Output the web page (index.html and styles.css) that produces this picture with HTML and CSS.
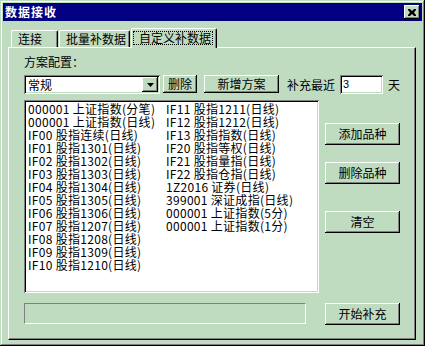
FILE: index.html
```html
<!DOCTYPE html>
<html>
<head>
	<meta charset="utf-8">
	<title>数据接收</title>
	<link rel="stylesheet" href="styles.css">
</head>
<body>
	<div class="window">
		<div class="titlebar">
			<span class="title">数据接收</span>
			<div class="close">
				<svg width="8" height="7" viewBox="0 0 8 7"><path d="M0 0h2l2 2 2-2h2v1l-2 2.5 2 2.5v1h-2l-2-2-2 2h-2v-1l2-2.5-2-2.5z" fill="#000"/></svg>
			</div>
		</div>
		<div class="tabs">
			<div class="tab tab-conn">连接</div>
			<div class="tab tab-batch">批量补数据</div>
			<div class="tab active"><span class="focus">自定义补数据</span></div>
		</div>
		<div class="panel">
			<div class="label">方案配置：</div>
			<div class="toolbar">
				<div class="combo">
					<span class="combo-text">常规</span>
					<span class="combo-btn">
						<svg width="7" height="4" viewBox="0 0 7 4"><path d="M0 0h7l-3.5 4z" fill="#000"/></svg>
					</span>
				</div>
				<div class="btn btn-del">删除</div>
				<div class="btn btn-new">新增方案</div>
				<span class="recent">补充最近</span>
				<div class="days">3</div>
				<span class="unit">天</span>
			</div>
			<div class="main">
				<div class="list">
					<div class="col col-first">
						<div class="item">000001 上证指数(分笔)</div>
						<div class="item">000001 上证指数(日线)</div>
						<div class="item">IF00 股指连续(日线)</div>
						<div class="item">IF01 股指1301(日线)</div>
						<div class="item">IF02 股指1302(日线)</div>
						<div class="item">IF03 股指1303(日线)</div>
						<div class="item">IF04 股指1304(日线)</div>
						<div class="item">IF05 股指1305(日线)</div>
						<div class="item">IF06 股指1306(日线)</div>
						<div class="item">IF07 股指1207(日线)</div>
						<div class="item">IF08 股指1208(日线)</div>
						<div class="item">IF09 股指1309(日线)</div>
						<div class="item">IF10 股指1210(日线)</div>
					</div>
					<div class="col">
						<div class="item">IF11 股指1211(日线)</div>
						<div class="item">IF12 股指1212(日线)</div>
						<div class="item">IF13 股指指数(日线)</div>
						<div class="item">IF20 股指等权(日线)</div>
						<div class="item">IF21 股指量指(日线)</div>
						<div class="item">IF22 股指仓指(日线)</div>
						<div class="item">1Z2016 证券(日线)</div>
						<div class="item">399001 深证成指(日线)</div>
						<div class="item">000001 上证指数(5分)</div>
						<div class="item">000001 上证指数(1分)</div>
					</div>
				</div>
				<div class="side">
					<div class="btn btn-side btn-add">添加品种</div>
					<div class="btn btn-side btn-remove">删除品种</div>
					<div class="btn btn-side btn-clear">清空</div>
				</div>
			</div>
			<div class="bottom">
				<div class="progress"></div>
				<div class="btn btn-side">开始补充</div>
			</div>
		</div>
	</div>
</body>
</html>
```

FILE: styles.css
```css
body {
	margin: 0;
	background: #c0dcc0;
	font-family: "Noto Sans CJK SC", "Liberation Sans", sans-serif;
	font-size: 12px;
	color: #000;
}
.window {
	width: 425px;
	height: 346px;
	box-sizing: border-box;
	padding: 3px;
	background: #c0dcc0;
	box-shadow: inset -1px -1px #000, inset 1px 1px #c0dcc0, inset -2px -2px #808080, inset 2px 2px #fff;
}
.titlebar {
	height: 18px;
	background: #000080;
	display: flex;
	align-items: center;
	justify-content: space-between;
	padding: 0 2px 0 2px;
}
.title {
	color: #fff;
	font-weight: bold;
	font-size: 12px;
	line-height: 18px;
	letter-spacing: 1px;
}
.close {
	width: 16px;
	height: 14px;
	background: #c0dcc0;
	display: flex;
	align-items: center;
	justify-content: center;
	box-shadow: inset -1px -1px #000, inset 1px 1px #fff, inset -2px -2px #808080;
}
.tabs {
	display: flex;
	align-items: flex-end;
	height: 20px;
	margin: 7px 0 -1px 8px;
	position: relative;
	z-index: 1;
}
.tab {
	height: 17px;
	margin-bottom: 1px;
	margin-right: 1px;
	box-sizing: border-box;
	border-top: 1px solid #fff;
	border-left: 1px solid #fff;
	border-right: 1px solid #000;
	box-shadow: inset -1px 0 #808080;
	border-radius: 2px 2px 0 0;
	padding-left: 6px;
	line-height: 15px;
	background: #c0dcc0;
}
.tab-conn {
	width: 47px;
}
.tab-batch {
	width: 71px;
}
.tab.active {
	width: 86px;
	height: 20px;
	margin-bottom: 0;
	padding-left: 1px;
	display: flex;
	align-items: flex-start;
}
.focus {
	margin-top: 2px;
	height: 14px;
	box-sizing: border-box;
	border: 1px dotted #000;
	padding: 0 1px 0 5px;
	line-height: 12px;
}
.panel {
	margin-left: 5px;
	width: 408px;
	height: 293px;
	box-sizing: border-box;
	border-top: 1px solid #fff;
	border-left: 1px solid #fff;
	border-right: 1px solid #000;
	border-bottom: 1px solid #000;
	box-shadow: inset -1px -1px #808080;
	padding: 7px 0 0 15px;
}
.label {
	line-height: 14px;
}
.toolbar {
	display: flex;
	align-items: flex-start;
	height: 19px;
	margin-top: 6px;
}
.combo {
	width: 136px;
	height: 19px;
	box-sizing: border-box;
	background: #fff;
	box-shadow: inset 1px 1px #808080, inset -1px -1px #fff, inset 2px 2px #000, inset -2px -2px #c0dcc0;
	display: flex;
	align-items: center;
	justify-content: space-between;
	padding: 2px;
}
.combo-text {
	padding-left: 2px;
	line-height: 15px;
}
.combo-btn {
	width: 16px;
	height: 15px;
	background: #c0dcc0;
	display: flex;
	align-items: center;
	justify-content: center;
	box-shadow: inset -1px -1px #000, inset 1px 1px #fff, inset -2px -2px #808080;
}
.btn {
	height: 18px;
	box-sizing: border-box;
	background: #c0dcc0;
	box-shadow: inset -1px -1px #000, inset 1px 1px #fff, inset -2px -2px #808080;
	display: flex;
	align-items: center;
	justify-content: center;
	line-height: 14px;
}
.btn-del {
	width: 34px;
	margin-left: 3px;
}
.btn-new {
	width: 75px;
	margin-left: 7px;
}
.recent {
	margin-left: 8px;
	line-height: 19px;
}
.days {
	width: 43px;
	height: 19px;
	margin-left: 5px;
	box-sizing: border-box;
	background: #fff;
	box-shadow: inset 1px 1px #808080, inset -1px -1px #fff, inset 2px 2px #000, inset -2px -2px #c0dcc0;
	padding: 2px 0 0 3px;
	line-height: 15px;
	font-family: "Liberation Sans", sans-serif;
	font-size: 11px;
}
.unit {
	margin-left: 5px;
	line-height: 19px;
}
.main {
	display: flex;
	margin-top: 6px;
	height: 193px;
}
.list {
	width: 295px;
	height: 193px;
	box-sizing: border-box;
	padding: 2px;
	background: #fff;
	box-shadow: inset 1px 1px #808080, inset -1px -1px #fff, inset 2px 2px #000, inset -2px -2px #c0dcc0;
	display: flex;
	line-height: 13px;
}
.item {
	white-space: pre;
	height: 13px;
	letter-spacing: 0.3px;
}
.col-first {
	width: 138px;
	padding-left: 2px;
}
.side {
	display: flex;
	flex-direction: column;
	margin-left: 6px;
}
.btn-side {
	width: 75px;
	height: 22px;
}
.btn-add {
	margin-top: 23px;
}
.btn-remove {
	margin-top: 17px;
}
.btn-clear {
	margin-top: 27px;
}
.bottom {
	display: flex;
	margin-top: 10px;
}
.progress {
	width: 282px;
	height: 21px;
	box-sizing: border-box;
	border-top: 1px solid #808080;
	border-left: 1px solid #808080;
	border-right: 1px solid #fff;
	border-bottom: 1px solid #fff;
	margin-right: 19px;
}
```
